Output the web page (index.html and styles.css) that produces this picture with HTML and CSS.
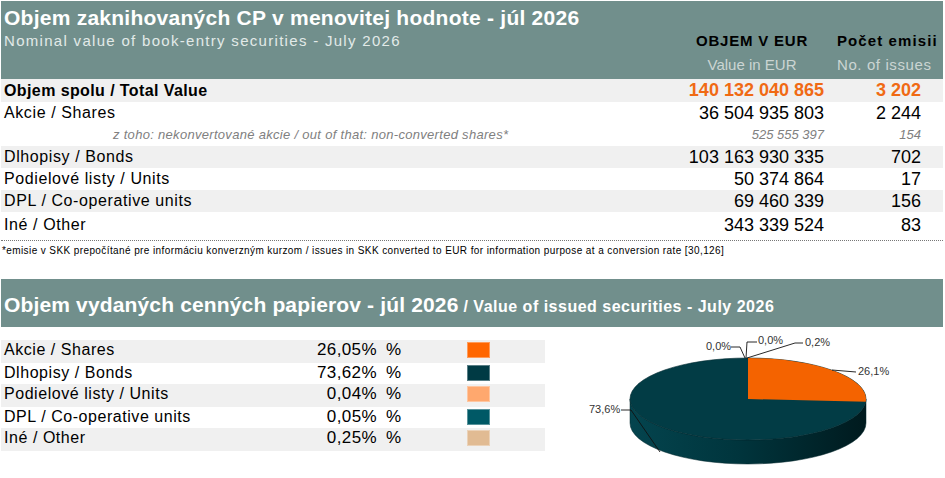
FILE: index.html
```html
<!DOCTYPE html>
<html lang="sk">
<head>
<meta charset="utf-8">
<title>Objem zaknihovaných CP</title>
<link rel="stylesheet" href="styles.css">
</head>
<body>
<div class="sheet">
  <header class="hdr1">
    <div class="t1">Objem zaknihovaných CP v menovitej hodnote - júl 2026</div>
    <div class="hgrid">
      <div class="sub1">Nominal value of book-entry securities - July 2026</div>
      <div class="ch ca">OBJEM V EUR</div>
      <div class="ch cb">Počet emisii</div>
      <div></div>
      <div class="ch2 ca">Value in EUR</div>
      <div class="ch2 cb">No. of issues</div>
    </div>
  </header>

  <div class="rows">
    <div class="row alt total r23"><span class="lbl">Objem spolu / Total Value</span><span class="num">140 132 040 865</span><span class="num">3 202</span></div>
    <div class="row"><span class="lbl">Akcie / Shares</span><span class="num">36 504 935 803</span><span class="num">2 244</span></div>
    <div class="row sub"><span class="lbl">z toho: nekonvertované akcie / out of that: non-converted shares*</span><span class="num">525 555 397</span><span class="num">154</span></div>
    <div class="row alt"><span class="lbl">Dlhopisy / Bonds</span><span class="num">103 163 930 335</span><span class="num">702</span></div>
    <div class="row"><span class="lbl">Podielové listy / Units</span><span class="num">50 374 864</span><span class="num">17</span></div>
    <div class="row alt"><span class="lbl">DPL / Co-operative units</span><span class="num">69 460 339</span><span class="num">156</span></div>
    <div class="row r26"><span class="lbl">Iné / Other</span><span class="num">343 339 524</span><span class="num">83</span></div>
  </div>

  <div class="note">*emisie v SKK prepočítané pre informáciu konverzným kurzom / issues in SKK converted to EUR for information purpose at a conversion rate [30,126]</div>

  <section class="sec2">
    <div class="hdr2">
      <span class="t2">Objem vydaných cenných papierov - júl 2026</span>
      <span class="s2">/ Value of issued securities - July 2026</span>
    </div>
    <div class="body2">
      <div class="legend">
        <div class="lrow alt h23"><span class="llbl">Akcie / Shares</span><span class="pct">26,05%</span><span class="unit">%</span><span class="sw sw1"></span></div>
        <div class="lrow h21"><span class="llbl">Dlhopisy / Bonds</span><span class="pct">73,62%</span><span class="unit">%</span><span class="sw sw2"></span></div>
        <div class="lrow alt h23"><span class="llbl">Podielové listy / Units</span><span class="pct">0,04%</span><span class="unit">%</span><span class="sw sw3"></span></div>
        <div class="lrow h21"><span class="llbl">DPL / Co-operative units</span><span class="pct">0,05%</span><span class="unit">%</span><span class="sw sw4"></span></div>
        <div class="lrow alt h23"><span class="llbl">Iné / Other</span><span class="pct">0,25%</span><span class="unit">%</span><span class="sw sw5"></span></div>
      </div>
      <svg class="pie" width="398" height="151" viewBox="0 0 398 151">
        <defs>
          <linearGradient id="side" x1="0" x2="1" y1="0" y2="0">
            <stop offset="0" stop-color="#04444e"/>
            <stop offset="0.45" stop-color="#00353d"/>
            <stop offset="1" stop-color="#001a1e"/>
          </linearGradient>
        </defs>
        <path d="M85,72 A118,41 0 0 0 321,72 L321,96 A118,41 0 0 1 85,96 Z" fill="url(#side)" stroke="#00252a" stroke-width="0.5"/>
        <ellipse cx="203" cy="72" rx="118" ry="41" fill="#023c45" stroke="#012a30" stroke-width="0.6"/>
        <path d="M203,72 L203,31 A118,41 0 0 1 320.7,74.8 Z" fill="#f46300"/>
        <g fill="none" stroke="#111" stroke-width="0.9">
          <polyline points="186,20 195,20 200,31"/>
          <polyline points="212,15 202,15 201,31"/>
          <polyline points="258,16 250,16 202,31"/>
          <polyline points="287,43 311,45"/>
          <polyline points="76,83 86,83 115,125"/>
        </g>
        <g class="plbl">
          <text x="161" y="23">0,0%</text>
          <text x="213" y="17">0,0%</text>
          <text x="260" y="19">0,2%</text>
          <text x="313" y="48">26,1%</text>
          <text x="44" y="86">73,6%</text>
        </g>
      </svg>
    </div>
  </section>
</div>
</body>
</html>
```
FILE: styles.css
```css
* { box-sizing: border-box; }

body {
  margin: 0;
  font-family: "Liberation Sans", Arial, sans-serif;
  color: #000;
  background: #fff;
}

.sheet {
  width: 942px;
  margin: 1px 0 0 1px;
}

/* ---------- header 1 ---------- */
.hdr1 {
  background: #718f8c;
  height: 78px;
  padding: 5px 0 0 3px;
}

.t1 {
  font-size: 21px;
  font-weight: bold;
  line-height: 24px;
  color: #fff;
  letter-spacing: 0.25px;
  white-space: nowrap;
}

.hgrid {
  display: grid;
  grid-template-columns: 1fr 140px 121px;
  row-gap: 4px;
  margin-top: 1px;
  line-height: 20px;
  font-size: 15px;
}

.sub1 {
  color: #e2eae8;
  letter-spacing: 1.3px;
  white-space: nowrap;
}

.ca { text-align: center; }
.cb { padding-left: 15px; white-space: nowrap; }

.ch { font-weight: bold; color: #000; }
.ch.ca { letter-spacing: 0.8px; }
.ch.cb { letter-spacing: 1.1px; }

.ch2 { color: #cbd5d3; }
.ch2.cb { letter-spacing: 0.6px; }

/* ---------- table rows ---------- */
.row {
  display: grid;
  grid-template-columns: 1fr 160px 97px 21px;
  height: 22px;
  line-height: 22px;
}
.row.r23 { height: 23px; line-height: 23px; }
.row.r26 { height: 26px; line-height: 26px; }
.alt { background: #f0f0f0; }

.lbl {
  padding-left: 3px;
  font-size: 16px;
  letter-spacing: 0.6px;
  white-space: nowrap;
}

.num {
  text-align: right;
  font-size: 18px;
  padding-right: 1px;
  white-space: nowrap;
}

.total .lbl { font-weight: bold; letter-spacing: 0.4px; }
.total .num { font-weight: bold; color: #f06a14; }

.sub .lbl,
.sub .num {
  font-style: italic;
  font-size: 13px;
  color: #808080;
}
.sub .lbl { padding-left: 112px; letter-spacing: 0.3px; }

.note {
  margin-top: 2px;
  border-top: 1px dotted #777;
  padding: 3px 0 0 1px;
  font-size: 10px;
  line-height: 14px;
  letter-spacing: 0.4px;
  white-space: nowrap;
}

/* ---------- section 2 ---------- */
.sec2 { margin-top: 21px; }

.hdr2 {
  background: #718f8c;
  height: 48px;
  display: flex;
  align-items: baseline;
  gap: 5px;
  padding: 3px 0 0 3px;
  line-height: 45px;
  color: #fff;
  font-weight: bold;
  white-space: nowrap;
}
.t2 { font-size: 21px; letter-spacing: 0.15px; }
.s2 { font-size: 16px; letter-spacing: 0.5px; }

.body2 { display: flex; align-items: flex-start; }

.legend {
  width: 544px;
  margin-top: 13px;
}

.lrow {
  display: grid;
  grid-template-columns: 280px 96px 90px 23px 1fr;
  align-items: start;
  line-height: 20px;
}
.h23 { height: 23px; }
.h21 { height: 21px; }

.llbl {
  padding-left: 3px;
  font-size: 16px;
  letter-spacing: 0.55px;
  white-space: nowrap;
}
.pct {
  text-align: right;
  font-size: 17px;
  letter-spacing: 0.4px;
}
.unit {
  padding-left: 9px;
  font-size: 17px;
}
.sw {
  height: 16px;
  margin-top: 2px;
  border: 1px solid rgba(255, 255, 255, 0.35);
}
.sw1 { background: #ff6600; }
.sw2 { background: #003a44; }
.sw3 { background: #ffa86e; }
.sw4 { background: #005966; }
.sw5 { background: #e1bb93; }

.pie { display: block; }
.plbl text {
  font-family: "Liberation Sans", Arial, sans-serif;
  font-size: 11px;
  fill: #333;
}
```
